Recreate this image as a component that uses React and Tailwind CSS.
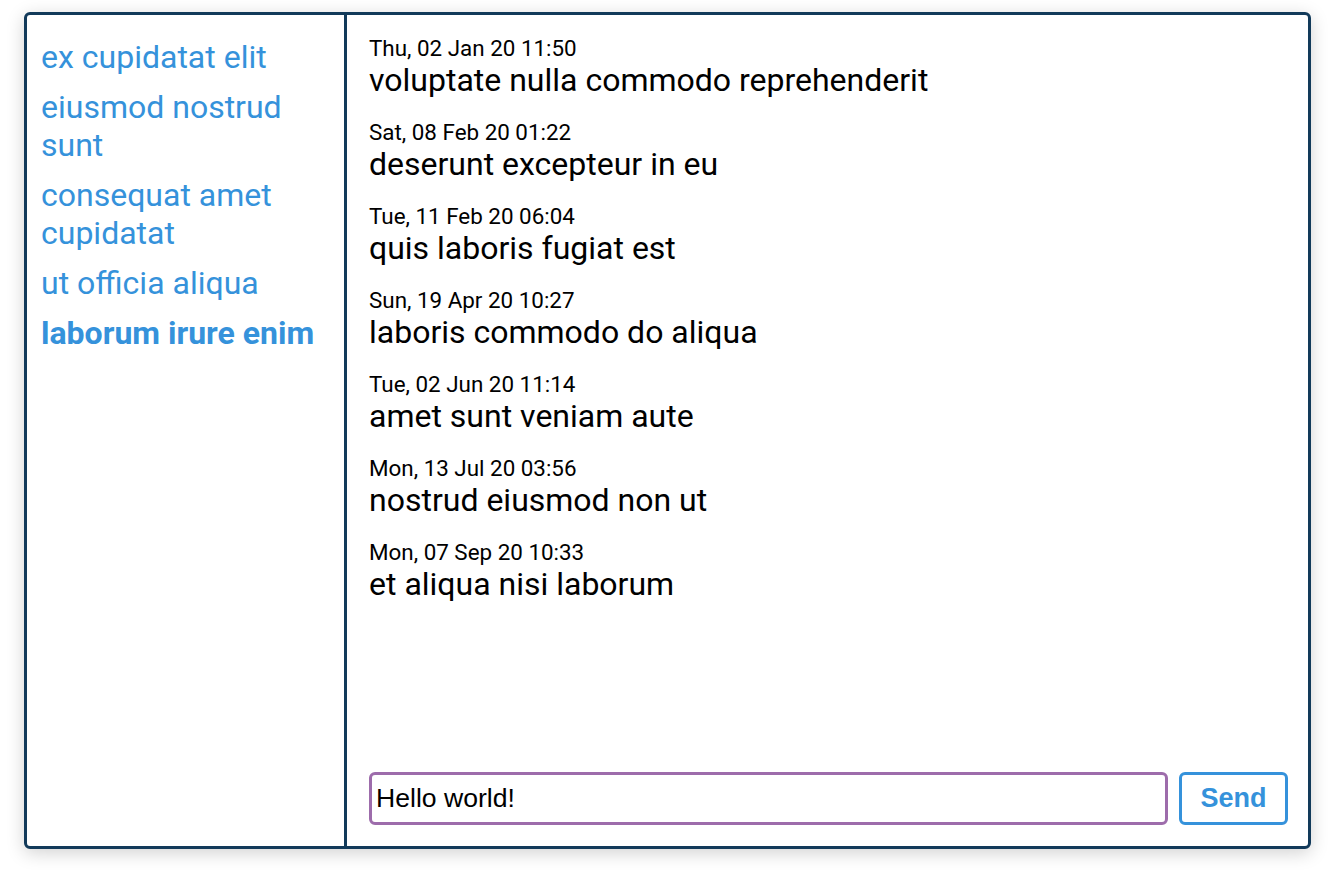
import { useState } from 'react';

const channels = [
  { name: 'ex cupidatat elit' },
  { name: 'eiusmod nostrud sunt' },
  { name: 'consequat amet cupidatat' },
  { name: 'ut officia aliqua' },
  { name: 'laborum irure enim', active: true },
];

const messages = [
  { date: 'Thu, 02 Jan 20 11:50', text: 'voluptate nulla commodo reprehenderit' },
  { date: 'Sat, 08 Feb 20 01:22', text: 'deserunt excepteur in eu' },
  { date: 'Tue, 11 Feb 20 06:04', text: 'quis laboris fugiat est' },
  { date: 'Sun, 19 Apr 20 10:27', text: 'laboris commodo do aliqua' },
  { date: 'Tue, 02 Jun 20 11:14', text: 'amet sunt veniam aute' },
  { date: 'Mon, 13 Jul 20 03:56', text: 'nostrud eiusmod non ut' },
  { date: 'Mon, 07 Sep 20 10:33', text: 'et aliqua nisi laborum' },
];

export default function App() {
  const [draft, setDraft] = useState('Hello world!');

  return (
    <div className="min-h-screen bg-white pl-[24px] pt-[12px] font-['Roboto',sans-serif]">
      <div className="w-[1287px] h-[837px] flex border-[3px] border-[#123a5a] rounded-[6px] shadow-[0_4px_18px_rgba(0,0,0,0.18)] overflow-hidden bg-white">
        {/* Channel list */}
        <div className="w-[320px] shrink-0 border-r-[3px] border-[#123a5a] pl-[14px] pr-[10px] pt-[23px]">
          <ul className="flex flex-col gap-[12px]">
            {channels.map((c) => (
              <li
                key={c.name}
                className={`text-[32px] leading-[38px] text-[#3592db] cursor-pointer ${c.active ? 'font-bold' : ''}`}
              >
                {c.name}
              </li>
            ))}
          </ul>
        </div>

        {/* Conversation */}
        <div className="flex-1 flex flex-col pl-[22px] pr-[20px] pt-[20px] pb-[21px]">
          <div className="flex-1 flex flex-col gap-[20px]">
            {messages.map((m) => (
              <div key={m.date}>
                <div className="text-[22.4px] leading-[26px] text-black">{m.date}</div>
                <div className="text-[32px] leading-[38px] text-black">{m.text}</div>
              </div>
            ))}
          </div>

          <div className="flex gap-[11px]">
            <input
              autoFocus
              value={draft}
              onChange={(e) => setDraft(e.target.value)}
              className="flex-1 h-[53px] border-[3px] border-[#9d6cab] rounded-[6px] px-[4px] text-[26.6px] text-black caret-black font-['Liberation_Sans',Arial,sans-serif] outline-none"
            />
            <button className="w-[109px] h-[53px] border-[3px] border-[#3592db] rounded-[6px] text-[27px] font-bold text-[#3592db] font-['Liberation_Sans',Arial,sans-serif] bg-white">
              Send
            </button>
          </div>
        </div>
      </div>
    </div>
  );
}
